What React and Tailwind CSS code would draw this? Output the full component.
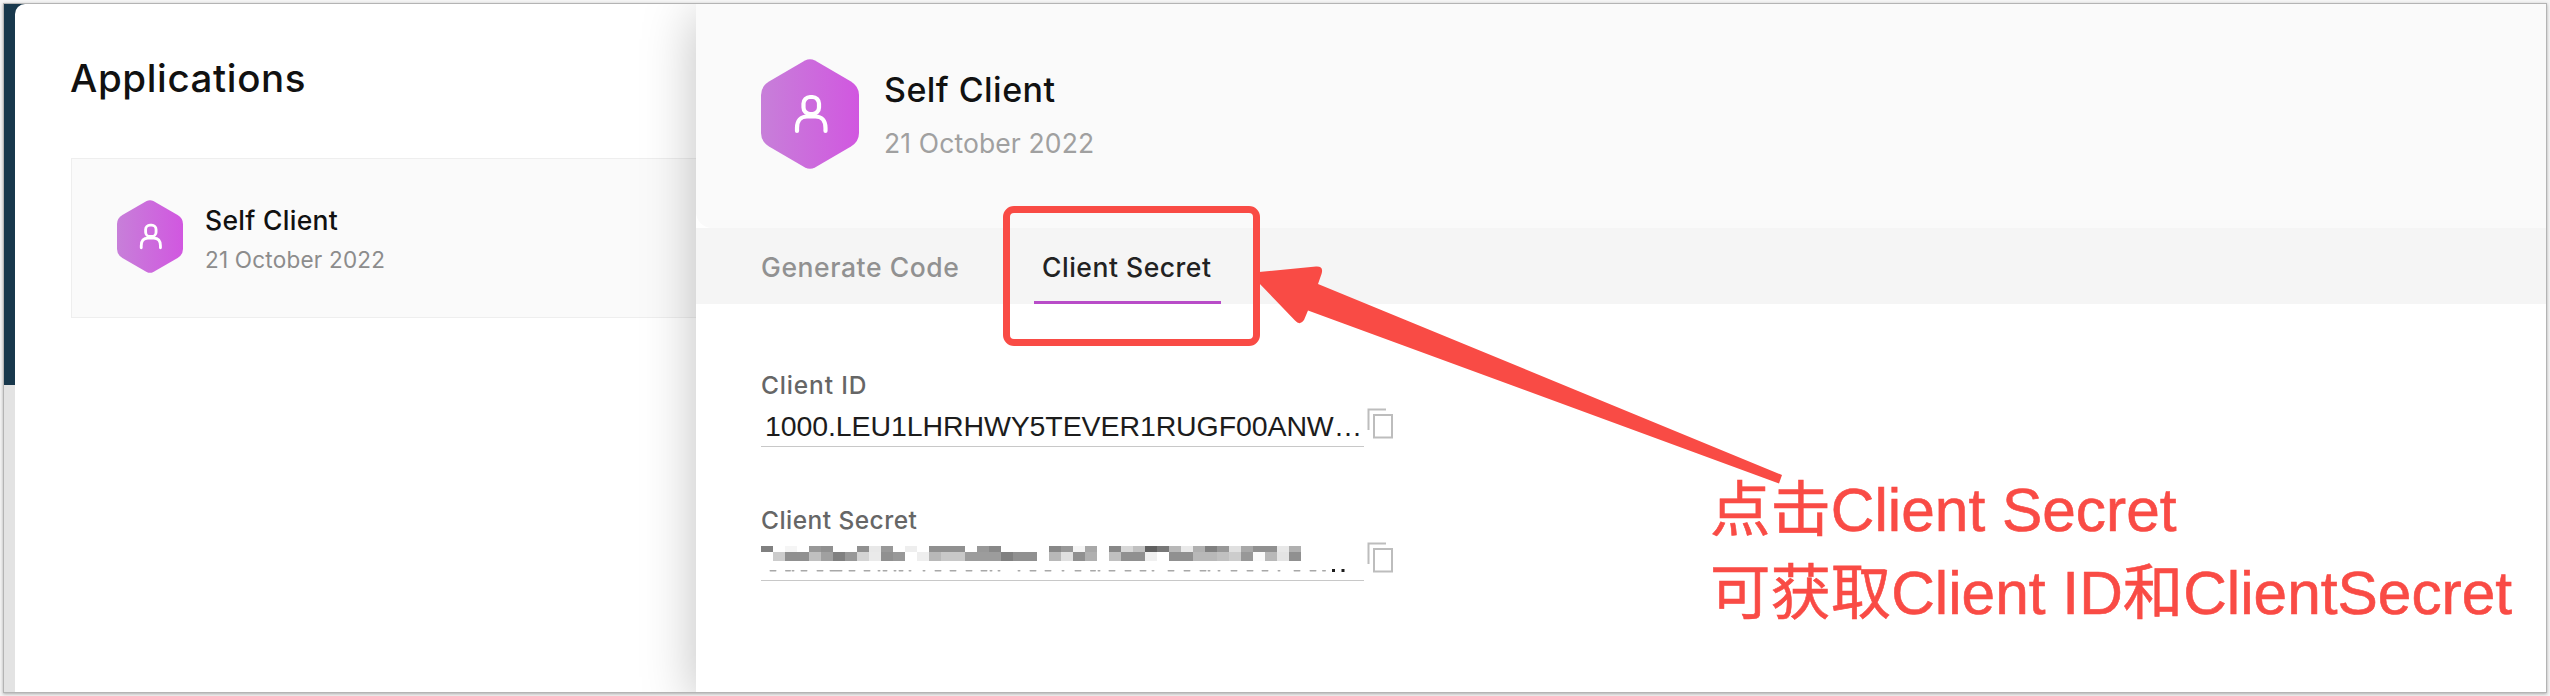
function HexUser({ className, id }) {
  return (
    <svg viewBox="0 0 98 110" preserveAspectRatio="none" className={className}>
      <defs>
        <linearGradient id={id} x1="0" y1="0" x2="1" y2="0">
          <stop offset="0" stopColor="#c77fd9" />
          <stop offset="1" stopColor="#d157e0" />
        </linearGradient>
      </defs>
      <path
        d="M44 1.6Q49 -1.2 54 1.6L90 22.5Q98 27.500 98 36V74Q98 82.500 90 87.500L54 108.400Q49 111.200 44 108.400L8 87.500Q0 82.500 0 74V36Q0 27.500 8 22.500Z"
        fill={`url(#${id})`}
      />
      <g fill="none" stroke="#fff" strokeWidth="4.200" strokeLinecap="round">
        <rect x="42.500" y="38" width="15.500" height="17" rx="6.500" />
        <path d="M36 72V69C36 61.500 40 57.500 46 57.500H54.500C60.500 57.500 64.500 61.500 64.500 69V72" />
      </g>
    </svg>
  );
}

function CopyIcon() {
  return (
    <svg viewBox="0 0 26 31" className="h-[31px] w-[26px] shrink-0" fill="none" stroke="#bdbdbd" strokeWidth="2">
      <path d="M1.500 22V1.500H19" />
      <rect x="7" y="7" width="18" height="22.500" />
    </svg>
  );
}

// Grey levels of the censoring blocks, two rows of 12px wide cells.
const TOP = "80 0 f5 0 98 90 0 0 90 e8 98 0 ee 0 90 90 90 0 98 88 0 0 0 0 88 98 f5 a8 0 88 d8 c0 60 78 b8 ea b0 80 98 e0 a8 90 90 e8 b0".split(" ");
const BOT = "0 cc 90 90 c0 a0 80 98 d4 ea 90 98 0 ee b8 c8 c8 9c 9c 9c 80 90 90 0 b8 e0 90 b0 0 c0 90 90 f0 0 90 90 b8 b8 c0 cc 98 fa b8 e4 90".split(" ");

// Feet of the hidden characters that stay visible under the blocks: [centre, width].
const FEET = [
  [12, 7], [27, 6], [32, 3], [43, 7], [59, 7], [75, 13], [91, 7], [106, 7], [118, 3], [124, 5], [134, 3], [140, 5], [149, 3], [163, 3],
  [177, 7], [192, 7], [208, 7], [223, 7], [230, 3], [238, 3], [258, 3], [272, 7], [287, 7], [302, 3], [317, 7], [332, 6], [338, 3],
  [351, 7], [367, 7], [382, 7], [392, 3], [410, 7], [426, 7], [442, 7], [448, 3], [458, 3], [473, 7], [489, 7], [504, 7], [518, 3], [536, 7], [552, 7], [563, 4],
];

function CensorRow({ cells, className }) {
  return (
    <div className={"flex " + className}>
      {cells.map((c, i) => (
        <span key={i} className="w-3 shrink-0" style={{ background: c === "0" ? "#fff" : `#${c}${c}${c}` }} />
      ))}
    </div>
  );
}

export default function App() {
  return (
    <div className="relative h-[696px] w-[2550px] overflow-hidden bg-[#f4f4f4] p-[3px] font-['Inter',sans-serif]">
      <div className="flex h-[690px] w-[2544px] overflow-hidden border border-[#b4b4b4] bg-white shadow-[0_1px_3px_rgba(0,0,0,0.3)]">
        <div className="flex w-[692px] shrink-0 bg-[linear-gradient(#18384c_0_381px,#e3e3e3_381px)]">
          <main className="ml-[11px] flex-1 rounded-tl-[10px] bg-white pl-[55px]">
            <h1 className="mt-[49px] h-[50px] text-[38.500px] leading-[50px] font-medium tracking-[0.620px] text-[#111]">Applications</h1>
            <section className="mt-[55px] ml-px flex h-[160px] items-start border border-r-0 border-[#eee] bg-[#fafafa] pl-[45px]">
              <HexUser id="hexSmall" className="mt-[41px] h-[73px] w-[66px]" />
              <div className="mt-[41px] ml-[22px]">
                <div className="h-[40px] text-[26.500px] leading-[40px] font-medium tracking-[0.300px] text-[#111]">Self Client</div>
                <div className="h-[38px] text-[22.500px] leading-[39px] tracking-[0.220px] text-[#8c8c8c]">21 October 2022</div>
              </div>
            </section>
          </main>
        </div>
        <aside className="z-10 flex-1 bg-white shadow-[0_10px_50px_rgba(0,0,0,0.25)]">
          <header className="flex h-[224px] rounded-bl-[16px] bg-[#fafafa] pl-[65px]">
            <HexUser id="hexLarge" className="mt-[55px] h-[110px] w-[98px]" />
            <div className="mt-[61px] ml-[25px]">
              <div className="h-[50px] text-[34px] leading-[50px] font-medium tracking-[0.450px] text-[#111]">Self Client</div>
              <div className="mt-[8px] h-[40px] text-[26.500px] leading-[40px] tracking-[0.120px] text-[#a0a0a0]">21 October 2022</div>
            </div>
          </header>
          <nav className="flex h-[76px] bg-[#f5f5f5] pl-[65px] text-[26.500px] font-medium">
            <div className="w-[273px] leading-[79px] tracking-[0.580px] text-[#919191]">Generate Code</div>
            <div className="h-[76px] w-[187px] border-b-[3px] border-[#b84cc8] pl-[8px] leading-[79px] tracking-[0.520px] text-[#222]">Client Secret</div>
          </nav>
          <div className="pt-[66px] pl-[65px]">
            <div className="h-[32px] text-[24.500px] leading-[31px] font-medium tracking-[0.850px] text-[#666]">Client ID</div>
            <div className="flex h-[45px]">
              <div className="h-[45px] w-[603px] border-b border-[#c8c8c8] pl-[4px] font-['Liberation_Sans',Arial,sans-serif] text-[28.500px] leading-[49px] tracking-[-0.100px] whitespace-nowrap text-[#1c1c1c]">
                1000.LEU1LHRHWY5TEVER1RUGF00ANW…
              </div>
              <div className="mt-[6px] ml-[3px]"><CopyIcon /></div>
            </div>
            <div className="mt-[58px] h-[32px] text-[24.500px] leading-[31px] font-medium tracking-[0.450px] text-[#666]">Client Secret</div>
            <div className="flex h-[44px]">
              <div className="h-[44px] w-[603px] border-b border-[#c8c8c8]">
                <CensorRow cells={TOP} className="mt-[9px] h-[6px]" />
                <CensorRow cells={BOT} className="h-[9px]" />
                <svg viewBox="0 0 603 12" className="h-[12px] w-[603px]">
                  {FEET.map(([x, w]) => (
                    <rect key={x} x={x - w / 2} y="9" width={w} height="1.500" rx="0.700" fill="#a8a8a8" />
                  ))}
                  <path d="M571 8h3v3h-3zM580.500 8h3v3h-3z" fill="#1c1c1c" />
                </svg>
              </div>
              <div className="mt-[5px] ml-[3px]"><CopyIcon /></div>
            </div>
          </div>
        </aside>
      </div>
      <div className="absolute top-[206px] left-[1003px] z-20 h-[140px] w-[257px] rounded-[11px] border-[7px] border-[#f94b45]" />
      <svg viewBox="0 0 540 230" className="absolute top-[260px] left-[1250px] z-20 h-[230px] w-[540px]">
        <path d="M9 12L66 6.500Q74 6 71.500 14L68 24L532 215L529 223.500L58 50.500L54 60Q50 66 45 60.500L8 22Z" fill="#f94b45" />
      </svg>
      <div className="absolute top-[469px] left-[1710px] z-20 font-['Liberation_Sans','Noto_Sans_CJK_SC',sans-serif] text-[60.400px] leading-[83px] whitespace-nowrap text-[#f94b45] [-webkit-text-stroke:0.6px_#f94b45]">
        <div>点击Client Secret</div>
        <div>可获取Client ID和ClientSecret</div>
      </div>
    </div>
  );
}
